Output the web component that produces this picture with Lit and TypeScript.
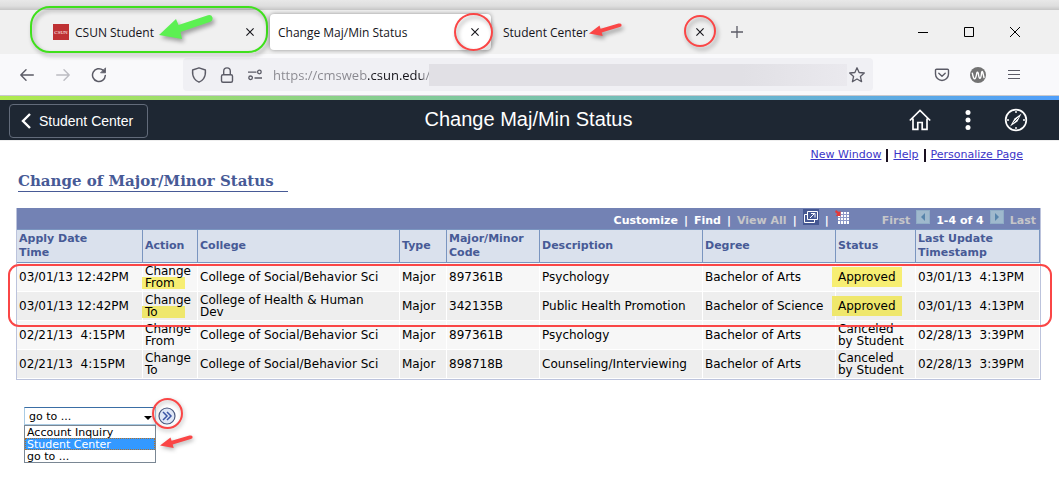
import { LitElement, html, css, svg } from "lit";
import { customElement, property } from "lit/decorators.js";

const closeGlyph = html`<svg width="8" height="8" viewBox="0 0 8 8" fill="none" stroke="#15141a" stroke-width="1.1"><path d="M.4.4l7.2 7.2M7.6.4L.4 7.6" /></svg>`;

const redArrow = (cls: string) => html`<svg class="mark ${cls}" width="33" height="14" viewBox="0 0 33 14" aria-hidden="true">
  <path fill="#fa4646" d="M0 10.500L10.500 2.500L11.600 5.700L29.500.500Q32 0 32.600 1.700Q33 3.300 30.800 4.100L12.700 9.500L13.700 13Z" /></svg>`;

@customElement("browser-chrome")
export class BrowserChrome extends LitElement {
  static styles = css`
    :host { display: block; font-family: "Open Sans", "Noto Sans", sans-serif; color: #15141a; }
    button { border: 0; padding: 0; margin: 0; background: none; font: inherit; color: inherit; display: inline-flex; align-items: center; justify-content: center; }
    svg { display: block; flex: none; }
    .edge { height: 10px; background: linear-gradient(#e8e8e8, #dedede 60%, #c6c6c6); }
    .strip { display: flex; align-items: center; height: 44px; padding: 0 32px 0 45px; background: #f0f0f0; box-sizing: border-box; }
    .tabs { display: flex; gap: 4px; }
    .tab { position: relative; display: flex; align-items: center; width: 221px; height: 36px; padding: 0 8px; box-sizing: border-box; border-radius: 4px; font-size: 12px; }
    .tab.active { background: #fff; box-shadow: 0 0 4px rgba(0, 0, 0, 0.4); }
    .name { flex: 1; justify-content: flex-start; gap: 6px; white-space: nowrap; }
    .close { width: 16px; height: 16px; }
    .fav { width: 16px; height: 16px; background: #bf3133; color: #fff; font: 5px "Liberation Serif", serif; display: grid; place-items: center; }
    .plus { width: 32px; height: 32px; margin-left: 5px; }
    .win { margin-left: auto; display: flex; gap: 22px; }
    .win button { width: 24px; height: 24px; }
    .bar { display: flex; align-items: center; height: 41px; padding: 0 33px 0 15px; box-sizing: border-box; background: #f9f9fb; }
    .nav { display: flex; gap: 12px; width: 168px; box-sizing: border-box; }
    .nav button, .tools button { width: 24px; height: 24px; }
    .url { flex: 1; min-width: 0; display: flex; align-items: center; height: 33px; background: #f0f0f4; border-radius: 4px; padding: 0 8px; box-sizing: border-box; }
    .site { display: flex; gap: 12px; margin-right: 10px; }
    .site button { width: 16px; height: 16px; }
    .address { width: 156px; border: 0; padding: 0; outline: 0; height: 22px; font: 13px "Open Sans", "Noto Sans", sans-serif; color: transparent; -webkit-text-fill-color: transparent; background: linear-gradient(90deg, #88878e 95px, #15141a 95px 150px, #88878e 150px); -webkit-background-clip: text; background-clip: text; }
    .redacted { flex: 1; height: 22px; background: linear-gradient(90deg, #e1e0e5, #e1e0e5 75%, #eae9ee); margin-right: 2px; }
    .tools { display: flex; gap: 12px; margin-left: 57px; }
    .rule { height: 5px; box-sizing: border-box; border-top: 1px solid #c9c9cd; background: linear-gradient(90deg, #b0ea4e, #84cc94 38%, #6bb6cb 70%, #509ffa); }
    .mark { position: absolute; pointer-events: none; box-sizing: border-box; overflow: visible; filter: drop-shadow(2px 3px 2px rgba(0, 0, 0, 0.35)); }
    .green { left: -15px; top: -8px; width: 238px; height: 47px; border: 2px solid #3fe01c; border-radius: 20px; }
    .garrow { left: 114px; top: 1px; }
    .ring { border: 2px solid #fa4646; border-radius: 50%; }
    .big { width: 39px; height: 38px; right: -2px; top: -1px; }
    .small { width: 32px; height: 32px; right: 0; top: 1px; }
    .rarrow { left: 94px; top: 9px; }
  `;

  render() {
    return html`
      <div class="edge"></div>
      <div class="strip">
        <div class="tabs">
          <div class="tab">
            <button class="name"><span class="fav">CSUN</span>CSUN Student</button>
            <button class="close" aria-label="Close tab">${closeGlyph}</button>
            <span class="mark green"></span>
            <svg class="mark garrow" width="54" height="24" viewBox="0 0 54 24"><path fill="#5cf052" d="M0 20L17 4L19.500 10L49 .200Q52.500-.500 53.500 2.500Q54 5.500 51.500 6.800L21.500 17L23 24Z" /></svg>
          </div>
          <div class="tab active">
            <button class="name">Change Maj/Min Status</button>
            <button class="close" aria-label="Close tab">${closeGlyph}</button>
            <span class="mark ring big"></span>
          </div>
          <div class="tab">
            <button class="name">Student Center</button>
            <button class="close" aria-label="Close tab">${closeGlyph}</button>
            <span class="mark ring small"></span>
            ${redArrow("rarrow")}
          </div>
        </div>
        <button class="plus" aria-label="New tab"><svg width="12" height="12" fill="none" stroke="#5b5b66" stroke-width="1.3"><path d="M6 0v12M0 6h12" /></svg></button>
        <div class="win">
          <button aria-label="Minimize"><svg width="10" height="10" stroke="#000"><path d="M0 5.500h10" /></svg></button>
          <button aria-label="Maximize"><svg width="10" height="10" fill="none" stroke="#000"><path d="M.5.5h9v9h-9z" /></svg></button>
          <button aria-label="Close"><svg width="10" height="10" fill="none" stroke="#000"><path d="M0 0l10 10M10 0L0 10" /></svg></button>
        </div>
      </div>
      <div class="bar">
        <div class="nav">
          <button aria-label="Back"><svg width="14" height="12" fill="none" stroke="#5b5b66" stroke-width="1.4" stroke-linecap="round" stroke-linejoin="round"><path d="M13.300 6H.8M6 .8L.8 6L6 11.200" /></svg></button>
          <button aria-label="Forward"><svg width="14" height="12" fill="none" stroke="#bcbcc2" stroke-width="1.4" stroke-linecap="round" stroke-linejoin="round"><path d="M.7 6h12.500M8 .8L13.200 6L8 11.200" /></svg></button>
          <button aria-label="Reload"><svg width="16" height="16" fill="none" stroke="#5b5b66" stroke-width="1.500" stroke-linecap="round"><path d="M14.300 8.500A6.400 6.400 0 1 1 12 3.200" /><path d="M14.500 1.200v4.600H9.900z" fill="#5b5b66" stroke-width=".8" stroke-linejoin="round" /></svg></button>
        </div>
        <div class="url">
          <div class="site">
            <button aria-label="Tracking protection"><svg width="16" height="16" fill="none" stroke="#5b5b66" stroke-width="1.4" stroke-linejoin="round"><path d="M8 .8L14.400 3Q14.800 8.400 12.600 11.600Q10.900 14 8 15.200Q5.100 14 3.400 11.600Q1.200 8.400 1.600 3Z" /></svg></button>
            <button aria-label="Connection secure"><svg width="16" height="16" fill="none" stroke="#5b5b66" stroke-width="1.400"><rect x="2.500" y="7.700" width="11" height="7.500" rx="1.500" /><path d="M4.700 7.700V4.200a3.300 3.300 0 0 1 6.600 0v3.500" /></svg></button>
            <button aria-label="Permissions"><svg width="16" height="16" fill="none" stroke="#5b5b66" stroke-width="1.300"><path d="M1 5.200h8.500M7.500 11h7.500" /><circle cx="12.400" cy="5" r="1.800" /><circle cx="3.600" cy="10.800" r="1.800" /></svg></button>
          </div>
          <input class="address" aria-label="Address" value="https://cmsweb.csun.edu/" />
          <span class="redacted"></span>
          <button aria-label="Bookmark"><svg width="16" height="16" fill="none" stroke="#5b5b66" stroke-width="1.300" stroke-linejoin="round"><path d="M8 .8l2.100 4.700 5.200.5-3.900 3.500 1.200 5.200L8 12l-4.600 2.700 1.200-5.200L.7 6l5.200-.5z" /></svg></button>
        </div>
        <div class="tools">
          <button aria-label="Save to Pocket"><svg width="16" height="14" fill="none" stroke="#5b5b66" stroke-width="1.400" stroke-linecap="round" stroke-linejoin="round"><path d="M2.500 1.200h11a1 1 0 0 1 1 1V6a6.500 6.500 0 0 1-13 0V2.200a1 1 0 0 1 1-1z" /><path d="M4.800 5.200L8 8.200l3.200-3" /></svg></button>
          <button aria-label="Extension"><svg width="16" height="16"><circle cx="8" cy="8" r="8" fill="#737373" /><path d="M2.300 6.200Q3.500 12.500 5 11.600Q6 11 6.800 6Q7.500 4 8.300 6.500Q9 11.500 10 11.300Q11.100 11 11.600 5.600Q12 3.500 12.800 5.500L14 10.500" fill="none" stroke="#fff" stroke-width="1.400" stroke-linecap="round" /></svg></button>
          <button aria-label="Menu"><svg width="12" height="12" stroke="#5b5b66" stroke-width="1.200"><path d="M0 1.500h12M0 5.500h12M0 9.500h12" /></svg></button>
        </div>
      </div>
      <div class="rule"></div>
    `;
  }
}

@customElement("portal-header")
export class PortalHeader extends LitElement {
  static styles = css`
    :host { display: grid; grid-template-columns: 1fr auto 1fr; align-items: center; height: 40px; padding: 0 31px 0 9px; background: #1e2733; border-bottom: 1px solid #eee; color: #fff; font-family: "Liberation Sans", Arial, sans-serif; }
    button { background: none; color: inherit; border: 0; padding: 0; font: inherit; display: flex; align-items: center; justify-content: center; }
    svg { display: block; }
    .back { justify-self: start; gap: 8px; height: 34px; padding: 0 14px 0 11px; border: 1px solid #626b7a; border-radius: 4px; font-size: 14px; margin-top: 2px; }
    .title { margin: 0; font-size: 20px; line-height: 24px; font-weight: 400; padding: 0 0 2px 20px; }
    .icons { justify-self: end; display: flex; gap: 24px; }
    .icons button { width: 24px; height: 24px; }
  `;
  render() {
    return html`
      <button class="back"><svg width="10" height="16" fill="none" stroke="#fff" stroke-width="2.400"><path d="M9 1L2 8l7 7" /></svg>Student Center</button>
      <h1 class="title">Change Maj/Min Status</h1>
      <div class="icons">
        <button aria-label="Home"><svg width="22" height="22" fill="none" stroke="#fff" stroke-width="1.700"><path d="M.8 11.500L11 1.500L21.200 11.500M4 9.500V20.300H8.800V13.500H13.200V20.300H18V9.500" /></svg></button>
        <button aria-label="Actions"><svg width="6" height="20" fill="#fff"><circle cx="3" cy="2.500" r="2.500" /><circle cx="3" cy="10" r="2.500" /><circle cx="3" cy="17.500" r="2.500" /></svg></button>
        <button aria-label="Navigator"><svg width="24" height="24" fill="none" stroke="#fff"><circle cx="12" cy="12" r="10.300" stroke-width="1.700" /><path d="M17.500 5.500L13.500 13.500L6 18.500L10.500 10.500Z" fill="#fff" stroke="none" /><path d="M9.500 14.500L14.500 9.500" stroke="#1e2733" stroke-width=".8" /><path d="M12 3v2M12 19v2M3 12h2M19 12h2" stroke-width="1.400" /></svg></button>
      </div>
    `;
  }
}

interface Row { applied: string; action: [string, string]; college: string; code: string; description: string; degree: string; status: string; updated: string; marked?: boolean; }

const rows: Row[] = [
  { applied: "03/01/13 12:42PM", action: ["Change", "From"], college: "College of Social/Behavior Sci", code: "897361B", description: "Psychology", degree: "Bachelor of Arts", status: "Approved", updated: "03/01/13  4:13PM", marked: true },
  { applied: "03/01/13 12:42PM", action: ["Change", "To"], college: "College of Health & Human\nDev", code: "342135B", description: "Public Health Promotion", degree: "Bachelor of Science", status: "Approved", updated: "03/01/13  4:13PM", marked: true },
  { applied: "02/21/13  4:15PM", action: ["Change", "From"], college: "College of Social/Behavior Sci", code: "897361B", description: "Psychology", degree: "Bachelor of Arts", status: "Canceled\nby Student", updated: "02/28/13  3:39PM" },
  { applied: "02/21/13  4:15PM", action: ["Change", "To"], college: "College of Social/Behavior Sci", code: "898718B", description: "Counseling/Interviewing", degree: "Bachelor of Arts", status: "Canceled\nby Student", updated: "02/28/13  3:39PM" },
];

const columns: [string, number][] = [
  ["Apply Date\nTime", 126], ["Action", 55], ["College", 202], ["Type", 47], ["Major/Minor\nCode", 93],
  ["Description", 163], ["Degree", 133], ["Status", 80], ["Last Update\nTimestamp", 124],
];

@customElement("status-grid")
export class StatusGrid extends LitElement {
  @property({ attribute: false }) rows: Row[] = [];

  static styles = css`
    :host { display: block; position: relative; border: 1px solid #bcc3dc; border-top: 0; font-family: "DejaVu Sans", Verdana, sans-serif; }
    .bar { display: flex; align-items: center; justify-content: flex-end; gap: 6px; height: 21px; padding: 0 4px; background: #7382b4; color: #fff; font-size: 11px; font-weight: 700; line-height: 14px; }
    .bar a, .bar span { color: #fff; text-decoration: none; padding-top: 5px; white-space: nowrap; }
    .bar .off { color: #c6c6c9; }
    .bar button { border: 0; padding: 0; margin-bottom: 3px; background: none; display: block; }
    .bar svg { display: block; }
    .pager { display: flex; align-items: center; gap: 6px; margin-left: 26px; }
    table { width: 100%; table-layout: fixed; border-collapse: separate; border-spacing: 0; font-size: 12px; line-height: 12px; color: #000; }
    th { height: 34px; padding: 0 2px; box-sizing: border-box; background: #dae1ed; color: #475a96; font-size: 11px; line-height: 14px; text-align: left; white-space: pre-line; border: solid #7a95c0; border-width: 1px 1px 1px 0; }
    td { height: 29px; padding: 0 0 0 2px; box-sizing: border-box; border: solid #fff; border-width: 0 1px 1px 0; background: #f7f7f7; }
    tr:nth-child(even) td { background: #eee; }
    .wrap { white-space: pre-line; }
    .time { white-space: pre; }
    .line { display: block; width: 40px; }
    .marked .line { background: #f7ee72; margin-left: -3px; padding-left: 3px; }
    .marked:nth-child(even) .line { background: #efe76c; }
    .approved { display: inline-block; background: #f7ee72; padding: 4px 6px; margin: 0 -6px; }
    .marked:nth-child(even) .approved { background: #efe76c; }
    .frame { position: absolute; left: -9px; right: -12px; top: 56px; height: 63px; box-sizing: border-box; border: 2px solid #fa4646; border-radius: 11px; pointer-events: none; }
  `;

  render() {
    const total = columns.reduce((sum, c) => sum + c[1], 0);
    const pageArrow = (d: string) => svg`<rect width="14" height="14" fill="#9fb9cd" /><rect x=".5" y=".5" width="13" height="13" fill="none" stroke="#90adc6" /><path d=${d} fill="#5885ab" />`;
    return html`
      <div class="bar">
        <a href="#">Customize</a><span>|</span><a href="#">Find</a><span>|</span><span class="off">View All</span><span>|</span>
        <button aria-label="Open in new window"><svg width="16" height="16" fill="none" stroke="#fff"><rect width="16" height="16" fill="#455792" stroke="none" /><path d="M4.500 2.500h10v8h-10zM4 5.500H1.500v8h10V11" /><path d="M7 9l4.500-4.500M8 4.500h4v4" /></svg></button>
        <span>|</span>
        <button aria-label="Download"><svg width="15" height="15"><path fill="#fff" d="M3 2h11v12H3z" /><path d="M5.500 2v12M8.500 2v12M11.500 2v12M3 4.500h11M3 7.500h11M3 10.500h11" stroke="#8d99c8" /><path d="M1 0l3 2 1.500-1V6H.8L2.200 4L0 2z" fill="#e23b3b" /></svg></button>
        <div class="pager">
          <span class="off">First</span>
          <button aria-label="Previous"><svg width="14" height="14">${pageArrow("M9 3v8L5 7z")}</svg></button>
          <span>1-4 of 4</span>
          <button aria-label="Next"><svg width="14" height="14">${pageArrow("M5 3v8l4-4z")}</svg></button>
          <span class="off">Last</span>
        </div>
      </div>
      <table>
        <colgroup>${columns.map(([, w]) => html`<col style="width:${(w / total) * 100}%" />`)}</colgroup>
        <thead><tr>${columns.map(([name]) => html`<th scope="col">${name}</th>`)}</tr></thead>
        <tbody>
          ${this.rows.map((r) => html`<tr class=${r.marked ? "marked" : ""}>
            <td class="time">${r.applied}</td>
            <td>${r.action[0]}<span class="line">${r.action[1]}</span></td>
            <td class="wrap">${r.college}</td><td>Major</td><td>${r.code}</td><td>${r.description}</td><td>${r.degree}</td>
            <td class="wrap">${r.marked ? html`<span class="approved">${r.status}</span>` : r.status}</td>
            <td class="time">${r.updated}</td>
          </tr>`)}
        </tbody>
      </table>
      <div class="frame"></div>
    `;
  }
}

@customElement("app-root")
export class AppRoot extends LitElement {
  static styles = css`
    :host { display: block; min-height: 100vh; background: #fff; font-family: "DejaVu Sans", Verdana, sans-serif; }
    .page { padding: 6px 18px 0 16px; }
    .links { display: flex; justify-content: flex-end; align-items: center; gap: 5px; padding-right: 18px; font-size: 11px; line-height: 16px; }
    .links a { color: #3b34c8; }
    .sep { width: 2px; height: 13px; background: #1a1020; }
    h2 { width: 270px; margin: 9px 0 16px 2px; padding-bottom: 1px; box-sizing: border-box; border-bottom: 1px solid #475a96; color: #475a96; font: 700 15px/18px "DejaVu Serif", Georgia, serif; white-space: nowrap; }
    .goto { display: flex; align-items: flex-start; margin: 27px 0 0 8px; }
    .picker { width: 132px; }
    .picker select { display: block; width: 100%; box-sizing: border-box; margin: 0; font: 11px "DejaVu Sans", Verdana, sans-serif; color: #000; border-radius: 0; outline: 0; }
    .picker .current { appearance: none; height: 18px; padding: 0 4px; border: 1px solid #a9cbe4; border-top-color: #3a6ea5; background: #fff; }
    .field { position: relative; }
    .caret { position: absolute; right: 4px; top: 9px; border: solid transparent; border-width: 4px 4px 0; border-top-color: #000; }
    .picker .list { height: 38px; padding: 0; border: 1px solid #7a8794; overflow: hidden; background: #fff; }
    .list option { height: 12px; min-height: 12px; line-height: 12px; padding: 0 2px; box-sizing: border-box; color: #000; }
    .list .active { background: #3399ff; color: #fff; outline: 1px dotted #b0702a; outline-offset: -1px; }
    .aside { position: relative; }
    .go { position: relative; display: block; margin: 0 0 0 2px; width: 18px; height: 18px; padding: 0; border: 0; background: none; }
    .go svg { display: block; }
    .ring { position: absolute; left: -6px; top: -9px; width: 31px; height: 31px; box-sizing: border-box; border: 2px solid #fa4646; border-radius: 50%; filter: drop-shadow(1px 2px 2px rgba(0, 0, 0, 0.3)); }
    .mark { position: absolute; left: 4px; top: 28px; filter: drop-shadow(1px 2px 2px rgba(0, 0, 0, 0.3)); }
  `;

  render() {
    return html`
      <browser-chrome></browser-chrome>
      <portal-header></portal-header>
      <main class="page">
        <nav class="links">
          <a href="#">New Window</a><span class="sep"></span><a href="#">Help</a><span class="sep"></span><a href="#">Personalize Page</a>
        </nav>
        <h2>Change of Major/Minor Status</h2>
        <status-grid .rows=${rows}></status-grid>
        <div class="goto">
          <div class="picker">
            <div class="field"><select class="current" aria-label="Go to page"><option>go to ...</option></select><span class="caret"></span></div>
            <select class="list" size="3" aria-label="Go to page choices"><option>Account Inquiry</option><option class="active">Student Center</option><option>go to ...</option></select>
          </div>
          <div class="aside">
            <button class="go" aria-label="Go"><svg width="18" height="18" fill="none"><circle cx="9" cy="9" r="8" fill="#dfe7f6" stroke="#4a5a80" stroke-width="1.200" /><path d="M5 5l4 4-4 4M9 5l4 4-4 4" stroke="#3b55a5" stroke-width="1.500" /></svg><span class="ring"></span></button>
            ${redArrow("")}
          </div>
        </div>
      </main>
    `;
  }
}
